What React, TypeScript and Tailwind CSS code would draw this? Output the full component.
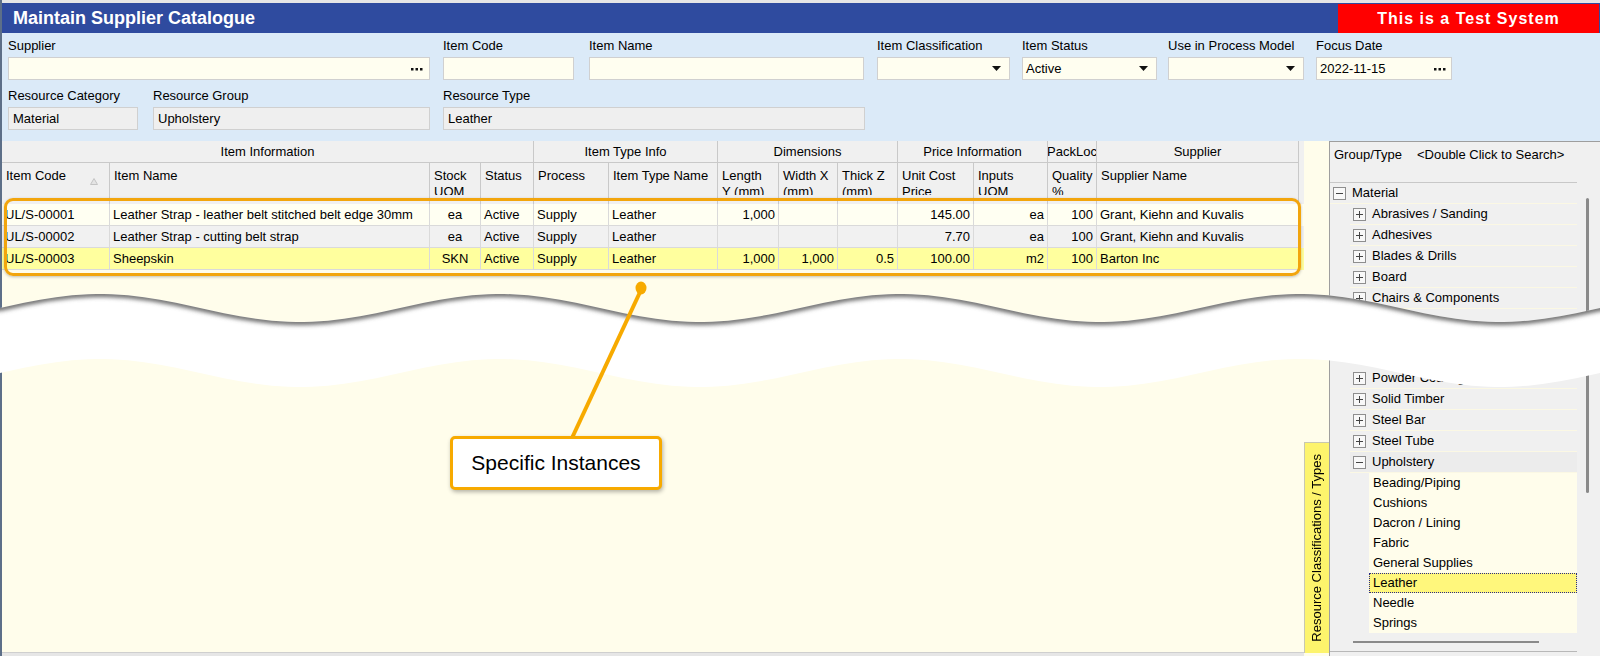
import React from 'react';

type Col = { w: string; head: string[]; align: string };

const cols: Col[] = [
  { w: 'w-[108px]', head: ['Item Code'], align: 'text-left' },
  { w: 'w-[320px]', head: ['Item Name'], align: 'text-left' },
  { w: 'w-[51px]', head: ['Stock', 'UOM'], align: 'text-center' },
  { w: 'w-[53px]', head: ['Status'], align: 'text-left' },
  { w: 'w-[75px]', head: ['Process'], align: 'text-left' },
  { w: 'w-[109px]', head: ['Item Type Name'], align: 'text-left' },
  { w: 'w-[61px]', head: ['Length', 'Y (mm)'], align: 'text-right' },
  { w: 'w-[59px]', head: ['Width X', '(mm)'], align: 'text-right' },
  { w: 'w-[60px]', head: ['Thick Z', '(mm)'], align: 'text-right' },
  { w: 'w-[76px]', head: ['Unit Cost', 'Price'], align: 'text-right' },
  { w: 'w-[74px]', head: ['Inputs', 'UOM'], align: 'text-right' },
  { w: 'w-[49px]', head: ['Quality', '%'], align: 'text-right' },
  { w: 'w-[202px]', head: ['Supplier Name'], align: 'text-left' },
];

const groups = [
  { w: 'w-[532px]', label: 'Item Information' },
  { w: 'w-[184px]', label: 'Item Type Info' },
  { w: 'w-[180px]', label: 'Dimensions' },
  { w: 'w-[150px]', label: 'Price Information' },
  { w: 'w-[49px]', label: 'PackLoc' },
  { w: 'w-[202px]', label: 'Supplier' },
];

const rows = [
  {
    bg: 'bg-[#fffff2]',
    cells: ['UL/S-00001', 'Leather Strap - leather belt stitched belt edge 30mm', 'ea', 'Active', 'Supply', 'Leather', '1,000', '', '', '145.00', 'ea', '100', 'Grant, Kiehn and Kuvalis'],
  },
  {
    bg: 'bg-[#f1f1f1]',
    cells: ['UL/S-00002', 'Leather Strap - cutting belt strap', 'ea', 'Active', 'Supply', 'Leather', '', '', '', '7.70', 'ea', '100', 'Grant, Kiehn and Kuvalis'],
  },
  {
    bg: 'bg-[#ffff9e]',
    cells: ['UL/S-00003', 'Sheepskin', 'SKN', 'Active', 'Supply', 'Leather', '1,000', '1,000', '0.5', '100.00', 'm2', '100', 'Barton Inc'],
  },
];

const groupsTop = ['Abrasives / Sanding', 'Adhesives', 'Blades & Drills', 'Board', 'Chairs & Components'];
const groupsHidden = ['Fasteners', 'Foam'];
const groupsBottom = ['Powder Coating', 'Solid Timber', 'Steel Bar', 'Steel Tube'];
const leaves = ['Beading/Piping', 'Cushions', 'Dacron / Lining', 'Fabric', 'General Supplies', 'Leather', 'Needle', 'Springs'];

function wave(base: number) {
  const pts: string[] = [];
  for (let x = 0; x <= 1600; x += 8) {
    const y = base - 14 * Math.cos((2 * Math.PI * (x - 100)) / 400);
    pts.push(`${x},${y.toFixed(1)}`);
  }
  return pts;
}

const topEdge = wave(308);
const botEdge = wave(373);
const bandPath = `M${topEdge.join(' L')} L${[...botEdge].reverse().join(' L')} Z`;
const topLine = `M-20,${topEdge[0].split(',')[1]} L${topEdge.join(' L')} L1620,${topEdge[topEdge.length - 1].split(',')[1]}`;

function Dots() {
  return (
    <svg width="12" height="4" viewBox="0 0 12 4">
      <rect x="0" y="1" width="2.5" height="2.5" fill="#111" />
      <rect x="4.5" y="1" width="2.5" height="2.5" fill="#111" />
      <rect x="9" y="1" width="2.5" height="2.5" fill="#111" />
    </svg>
  );
}

function Caret() {
  return (
    <svg width="9" height="5" viewBox="0 0 9 5">
      <path d="M0 0h9L4.5 5z" fill="#111" />
    </svg>
  );
}

function TreeBox({ open }: { open?: boolean }) {
  return (
    <svg width="13" height="13" viewBox="0 0 13 13" className="shrink-0">
      <rect x="0.5" y="0.5" width="12" height="12" fill="#f8f8f8" stroke="#8e8e8e" />
      <path d="M3 6.5h7" stroke="#444" />
      {!open && <path d="M6.5 3v7" stroke="#444" />}
    </svg>
  );
}

function Field({ label, ml, w, value, grey, right }: { label: string; ml: string; w: string; value?: string; grey?: boolean; right?: React.ReactNode }) {
  return (
    <div className={`${ml} ${w} flex flex-col`}>
      <div className="h-[16px] leading-[16px] whitespace-nowrap">{label}</div>
      <div
        className={`mt-[3px] h-[23px] flex items-center border border-[#d0d0d0] ${grey ? 'bg-[#efefef] pl-[4px]' : 'bg-[#fffef0] pl-[3px]'}`}
      >
        <span className="flex-1">{value}</span>
        {right}
      </div>
    </div>
  );
}

function GroupRow({ label }: { label: string }) {
  return (
    <div className="h-[21px] ml-[20px] pl-[3px] flex items-center bg-[#f0f0f0] border-b border-[#fbf8e4] whitespace-nowrap overflow-hidden">
      <TreeBox />
      <span className="ml-[6px]">{label}</span>
    </div>
  );
}

export default function App() {
  return (
    <div className="relative w-[1600px] h-[656px] overflow-hidden flex bg-[#fffdeb] text-[13px] text-black font-['Liberation_Sans',Arial,sans-serif]">
      {/* window edge behind */}
      <div className="w-[2px] h-full bg-[#5d6f88]" />

      <div className="w-[1598px] flex flex-col">
        <div className="h-[3px] bg-[#e6e6e6]" />

        {/* title bar */}
        <div className="h-[30px] flex items-center bg-[#2f4b9f]">
          <span className="pl-[11px] text-[18px] font-bold text-white">Maintain Supplier Catalogue</span>
          <div className="ml-auto mr-[1px] w-[261px] h-full mt-[1px] bg-[#ff0000] flex items-center justify-center text-white font-bold text-[16px] tracking-[1px]">
            This is a Test System
          </div>
        </div>

        {/* filters */}
        <div className="h-[108px] bg-[#dbeaf8] pt-[5px]">
          <div className="flex">
            <Field label="Supplier" ml="ml-[6px]" w="w-[422px]" right={<span className="pr-[6px]"><Dots /></span>} />
            <Field label="Item Code" ml="ml-[13px]" w="w-[131px]" />
            <Field label="Item Name" ml="ml-[15px]" w="w-[275px]" />
            <Field label="Item Classification" ml="ml-[13px]" w="w-[133px]" right={<span className="pr-[8px] flex"><Caret /></span>} />
            <Field label="Item Status" ml="ml-[12px]" w="w-[135px]" value="Active" right={<span className="pr-[8px] flex"><Caret /></span>} />
            <Field label="Use in Process Model" ml="ml-[11px]" w="w-[136px]" right={<span className="pr-[8px] flex"><Caret /></span>} />
            <Field label="Focus Date" ml="ml-[12px]" w="w-[136px]" value="2022-11-15" right={<span className="pr-[5px]"><Dots /></span>} />
          </div>
          <div className="flex mt-[8px]">
            <Field label="Resource Category" ml="ml-[6px]" w="w-[130px]" value="Material" grey />
            <Field label="Resource Group" ml="ml-[15px]" w="w-[277px]" value="Upholstery" grey />
            <Field label="Resource Type" ml="ml-[13px]" w="w-[422px]" value="Leather" grey />
          </div>
        </div>

        {/* main area */}
        <div className="flex flex-1 min-h-0">
          {/* grid */}
          <div className="w-[1302px] flex flex-col">
            <div className="flex h-[22px] bg-[#f0f0f0]">
              {groups.map((g) => (
                <div key={g.label} className={`${g.w} h-full border-r border-b border-[#c9c9c9] flex items-center justify-center whitespace-nowrap overflow-hidden`}>
                  {g.label}
                </div>
              ))}
            </div>
            <div className="flex h-[41px] bg-[#f0f0f0]">
              {cols.map((c, i) => (
                <div key={i} className={`${c.w} relative h-full border-r border-[#c9c9c9]`}>
                  <div className="h-[32px] overflow-hidden pt-[5px] pl-[4px] leading-[16px] whitespace-nowrap">
                    {c.head.map((h) => (
                      <div key={h}>{h}</div>
                    ))}
                  </div>
                  {i === 0 && (
                    <svg width="8" height="7" viewBox="0 0 8 7" className="absolute left-[88px] top-[15px]">
                      <path d="M4 0.5L7.5 6.5H0.5Z" fill="#e4e4e4" stroke="#c4c4c4" />
                    </svg>
                  )}
                </div>
              ))}
            </div>
            {rows.map((r, ri) => (
              <div key={ri} className={`flex h-[22px] ${r.bg}`}>
                {r.cells.map((v, ci) => (
                  <div
                    key={ci}
                    className={`${cols[ci].w} ${cols[ci].align} h-full px-[3px] leading-[21px] border-r border-b border-[#dadada] whitespace-nowrap overflow-hidden`}
                  >
                    {v}
                  </div>
                ))}
              </div>
            ))}
            <div className="flex-1" />
            <div className="h-[4px] bg-[#e6e6e6] border-t border-[#cfcfcf]" />
          </div>

          {/* side tab */}
          <div className="w-[25px] flex flex-col justify-end pb-[3px]">
            <div className="h-[211px] bg-[#fdf46c] border-t border-l border-[#c8c8b0] flex items-center justify-center">
              <span className="[writing-mode:vertical-rl] rotate-180 whitespace-nowrap text-[13px]">Resource Classifications / Types</span>
            </div>
          </div>

          {/* tree panel */}
          <div className="w-[271px] flex bg-[#f0f0f0] border-l border-t border-[#9e9e9e] pb-[4px]">
            <div className="w-[247px] flex flex-col border-b border-[#b8b8b8]">
              <div className="h-[41px] border-b border-[#c8c8c8] pt-[3px] pl-[4px] whitespace-nowrap">
                <span>Group/Type</span>
                <span className="ml-[15px]">&lt;Double Click to Search&gt;</span>
              </div>
              <div className="h-[21px] pl-[3px] flex items-center border-b border-[#fbf8e4]">
                <TreeBox open />
                <span className="ml-[6px]">Material</span>
              </div>
              {groupsTop.map((g) => (
                <GroupRow key={g} label={g} />
              ))}
              {groupsHidden.map((g) => (
                <GroupRow key={g} label={g} />
              ))}
              <div className="h-[17px]" />
              {groupsBottom.map((g) => (
                <GroupRow key={g} label={g} />
              ))}
              <div className="h-[21px] ml-[20px] pl-[3px] flex items-center bg-[#ececec] border-b border-[#fbf8e4]">
                <TreeBox open />
                <span className="ml-[6px]">Upholstery</span>
              </div>
              {leaves.map((l) => (
                <div
                  key={l}
                  className={`h-[20px] ml-[39px] pl-[4px] flex items-center whitespace-nowrap ${
                    l === 'Leather' ? 'bg-[#fff77c] outline-1 outline-dotted outline-[#2a2a8a] -outline-offset-1' : 'bg-[#fffdeb]'
                  }`}
                >
                  {l}
                </div>
              ))}
              <div className="flex-1 flex items-center pl-[23px]">
                <div className="w-[186px] h-[2px] bg-[#8a8a8a]" />
              </div>
            </div>
            <div className="w-[23px] pt-[56px] pl-[9px]">
              <div className="w-[3px] h-[295px] rounded-full bg-[#8a8a8a]" />
            </div>
          </div>
        </div>
      </div>

      {/* torn-paper cut */}
      <svg className="absolute left-0 top-0 pointer-events-none" width="1600" height="656" viewBox="0 0 1600 656">
        <defs>
          <clipPath id="band">
            <path d={bandPath} />
          </clipPath>
          <filter id="soft" filterUnits="userSpaceOnUse" x="-50" y="0" width="1700" height="656">
            <feGaussianBlur stdDeviation="2.2" />
          </filter>
        </defs>
        <path d={bandPath} fill="#ffffff" />
        <g clipPath="url(#band)">
          <path d={topLine} fill="none" stroke="#6a6a6a" strokeWidth="6" filter="url(#soft)" />
        </g>
      </svg>

      {/* callout */}
      <div className="absolute left-[4px] top-[198px] w-[1297px] h-[78px] rounded-[9px] border-[3px] border-[#f2a50c] shadow-[0_1px_3px_rgba(0,0,0,0.25)] pointer-events-none" />
      <svg className="absolute left-0 top-0 pointer-events-none" width="1600" height="656" viewBox="0 0 1600 656">
        <line x1="641" y1="290" x2="572" y2="438" stroke="#f7aa00" strokeWidth="4" />
        <ellipse cx="641" cy="288" rx="5.5" ry="6.5" fill="#f7aa00" />
      </svg>
      <div className="absolute left-[450px] top-[436px] w-[212px] h-[54px] rounded-[5px] border-[3px] border-[#f7aa00] bg-white shadow-[1px_2px_4px_rgba(0,0,0,0.3)] flex items-center justify-center text-[21px] font-['Liberation_Sans',Arial,sans-serif]">
        Specific Instances
      </div>
    </div>
  );
}
